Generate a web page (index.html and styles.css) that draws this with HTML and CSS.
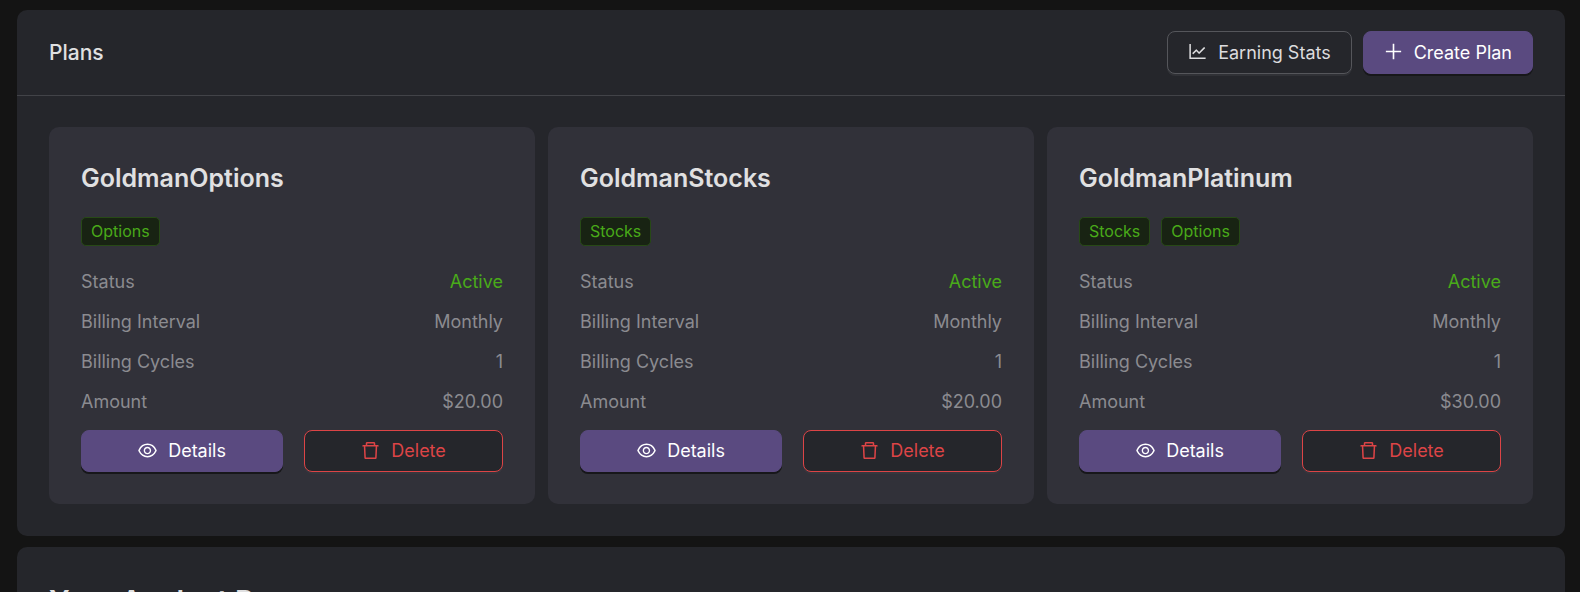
FILE: index.html
```
<!DOCTYPE html>
<html lang="en">
<head>
  <meta charset="UTF-8" />
  <meta name="viewport" content="width=device-width, initial-scale=1.0"/>
  <title>Plans</title>
  <link rel="stylesheet" href="styles.css">
</head>
<body>
  <!-- icons -->
  <svg class="sprite" aria-hidden="true">
    <symbol id="icon-chart" viewBox="64 64 896 896">
      <path d="M888 792H200V168c0-4.400-3.600-8-8-8h-56c-4.400 0-8 3.600-8 8v688c0 4.400 3.600 8 8 8h752c4.400 0 8-3.600 8-8v-56c0-4.400-3.600-8-8-8zM305.800 637.700c3.100 3.100 8.100 3.100 11.300 0l138.300-137.600L583 628.500c3.100 3.100 8.200 3.100 11.300 0l275.400-275.300c3.100-3.100 3.100-8.200 0-11.300l-39.600-39.600a8.030 8.030 0 0 0-11.300 0l-230 229.900L461.400 404a8.030 8.030 0 0 0-11.300 0L266.300 586.700a8.030 8.030 0 0 0 0 11.300l39.500 39.700z"/>
    </symbol>
    <symbol id="icon-plus" viewBox="64 64 896 896">
      <path d="M482 152h60q8 0 8 8v704q0 8-8 8h-60q-8 0-8-8V160q0-8 8-8z"/>
      <path d="M160 474h704q8 0 8 8v60q0 8-8 8H160q-8 0-8-8v-60q0-8 8-8z"/>
    </symbol>
    <symbol id="icon-eye" viewBox="64 64 896 896">
      <path d="M942.200 486.200C847.400 286.500 704.100 186 512 186c-192.200 0-335.400 100.500-430.200 300.300a60.300 60.300 0 0 0 0 51.500C176.600 737.500 319.900 838 512 838c192.200 0 335.400-100.500 430.200-300.300 7.700-16.200 7.700-35 0-51.500zM512 766c-161.300 0-279.400-81.800-362.700-254C232.600 339.800 350.700 258 512 258c161.300 0 279.400 81.800 362.700 254C791.500 684.200 673.400 766 512 766zm-4-430c-97.200 0-176 78.800-176 176s78.800 176 176 176 176-78.800 176-176-78.800-176-176-176zm0 288c-61.900 0-112-50.100-112-112s50.100-112 112-112 112 50.100 112 112-50.100 112-112 112z"/>
    </symbol>
    <symbol id="icon-trash" viewBox="64 64 896 896">
      <path d="M360 184h304v72h72v-80c0-35.300-28.700-64-64-64H352c-35.300 0-64 28.700-64 64v80h72v-72zm504 72H160c-17.700 0-32 14.300-32 32v32c0 4.400 3.600 8 8 8h60.400l24.700 523c1.600 34.100 29.800 61 63.900 61h454c34.200 0 62.300-26.800 63.900-61l24.700-523H888c4.400 0 8-3.600 8-8v-32c0-17.700-14.300-32-32-32zM731.300 840H292.700l-24.200-512h487l-24.200 512z"/>
    </symbol>
  </svg>

  <main class="page">
    <section class="panel">
      <header class="panel-header">
        <h2 class="panel-title">Plans</h2>
        <div class="panel-actions">
          <button class="btn btn-default" type="button"><svg class="icon"><use href="#icon-chart"/></svg>Earning Stats</button>
          <button class="btn btn-primary" type="button"><svg class="icon"><use href="#icon-plus"/></svg>Create Plan</button>
        </div>
      </header>

      <div class="plans">
        <article class="plan">
          <h3 class="plan-name">GoldmanOptions</h3>
          <div class="tags"><span class="tag">Options</span></div>
          <dl class="details">
            <div class="row"><dt>Status</dt><dd class="active">Active</dd></div>
            <div class="row"><dt>Billing Interval</dt><dd>Monthly</dd></div>
            <div class="row"><dt>Billing Cycles</dt><dd>1</dd></div>
            <div class="row"><dt>Amount</dt><dd>$20.00</dd></div>
          </dl>
          <div class="plan-actions">
            <button class="btn btn-primary" type="button"><svg class="icon"><use href="#icon-eye"/></svg>Details</button>
            <button class="btn btn-danger" type="button"><svg class="icon"><use href="#icon-trash"/></svg>Delete</button>
          </div>
        </article>

        <article class="plan">
          <h3 class="plan-name">GoldmanStocks</h3>
          <div class="tags"><span class="tag">Stocks</span></div>
          <dl class="details">
            <div class="row"><dt>Status</dt><dd class="active">Active</dd></div>
            <div class="row"><dt>Billing Interval</dt><dd>Monthly</dd></div>
            <div class="row"><dt>Billing Cycles</dt><dd>1</dd></div>
            <div class="row"><dt>Amount</dt><dd>$20.00</dd></div>
          </dl>
          <div class="plan-actions">
            <button class="btn btn-primary" type="button"><svg class="icon"><use href="#icon-eye"/></svg>Details</button>
            <button class="btn btn-danger" type="button"><svg class="icon"><use href="#icon-trash"/></svg>Delete</button>
          </div>
        </article>

        <article class="plan">
          <h3 class="plan-name">GoldmanPlatinum</h3>
          <div class="tags"><span class="tag">Stocks</span><span class="tag">Options</span></div>
          <dl class="details">
            <div class="row"><dt>Status</dt><dd class="active">Active</dd></div>
            <div class="row"><dt>Billing Interval</dt><dd>Monthly</dd></div>
            <div class="row"><dt>Billing Cycles</dt><dd>1</dd></div>
            <div class="row"><dt>Amount</dt><dd>$30.00</dd></div>
          </dl>
          <div class="plan-actions">
            <button class="btn btn-primary" type="button"><svg class="icon"><use href="#icon-eye"/></svg>Details</button>
            <button class="btn btn-danger" type="button"><svg class="icon"><use href="#icon-trash"/></svg>Delete</button>
          </div>
        </article>
      </div>
    </section>

    <section class="panel panel-analyst">
      <h2 class="section-title">Your Analyst Page</h2>
    </section>
  </main>
</body>
</html>
```
FILE: styles.css
```
* {
  box-sizing: border-box;
  margin: 0;
  padding: 0;
}

body {
  height: 100vh;
  overflow: hidden;
  background: #141414;
  color: #e0e0e1;
  font-family: 'Inter', 'Helvetica', 'Arial', sans-serif;
  font-size: 18px;
  line-height: 28px;
}

.sprite {
  display: none;
}

.page {
  display: flex;
  flex-direction: column;
  gap: 11px;
  padding: 10px 15px 10px 17px;
}

.panel {
  background: #25262b;
  border-radius: 10px;
}

.panel-header {
  display: flex;
  align-items: center;
  justify-content: space-between;
  padding: 21px 32px;
  border-bottom: 1px solid #424348;
}

.panel-title {
  font-size: 21px;
  font-weight: 500;
}

.panel-actions {
  display: flex;
  gap: 11px;
}

.btn {
  display: flex;
  align-items: center;
  justify-content: center;
  gap: 11px;
  height: 43px;
  padding: 0 20px;
  border: 1px solid transparent;
  border-radius: 8px;
  font: inherit;
  cursor: pointer;
}

.icon {
  width: 19px;
  height: 19px;
  margin-bottom: 2px;
  fill: currentColor;
}

.btn-default {
  background: #25262b;
  border-color: #55565b;
  color: #dcdcde;
  box-shadow: 0 2px 0 #303136;
}

.btn-primary {
  background: #5a4a80;
  border-color: #5a4a80;
  color: #fff;
  box-shadow: 0 2px 0 #17171a;
}

.btn-danger {
  background: #25262b;
  border-color: #dc4446;
  color: #dc4446;
  box-shadow: 0 2px 0 #37363d;
}

.plans {
  display: grid;
  grid-template-columns: repeat(3, 1fr);
  gap: 13px;
  padding: 31px 32px 32px;
}

.plan {
  padding: 32px;
  background: #313139;
  border-radius: 10px;
}

.plan-name {
  font-size: 25px;
  font-weight: 600;
  line-height: 38px;
}

.tags {
  display: flex;
  gap: 11px;
  margin: 20px 0 16px;
}

.tag {
  padding: 0 9px;
  background: #182313;
  border: 1px solid #274916;
  border-radius: 5px;
  color: #49aa19;
  font-size: 16px;
  line-height: 27px;
}

.row {
  display: flex;
  justify-content: space-between;
  line-height: 40px;
  color: #8b8b90;
}

.row .active {
  color: #49aa19;
}

.plan-actions {
  display: flex;
  gap: 21px;
  margin-top: 8px;
}

.plan-actions .btn {
  flex: 1 1 auto;
  height: 42px;
}

.panel-analyst {
  padding: 32px;
}

.section-title {
  font-size: 29px;
  font-weight: 600;
  line-height: 44px;
}
```
